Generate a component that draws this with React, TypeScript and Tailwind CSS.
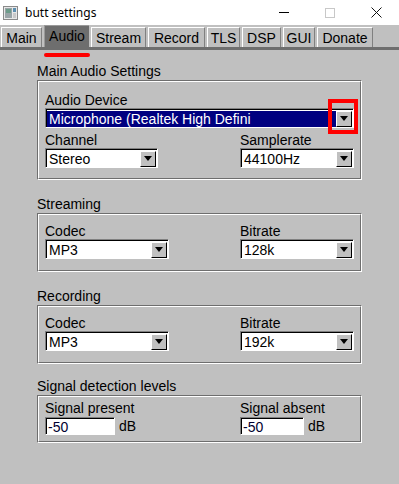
import React from "react";

const font = { fontFamily: '"Liberation Sans", Arial, sans-serif' };

function TitleIcon() {
  return (
    <svg width="15" height="14" viewBox="0 0 15 14" className="ml-[3px]">
      <rect x="0.5" y="0.5" width="14" height="13" fill="#e8e8e8" stroke="#8a8a8a" />
      <rect x="2" y="2" width="7" height="10" fill="#9aa5a8" />
      <rect x="3" y="3" width="5" height="4" fill="#6d9c8a" />
      <rect x="10" y="2" width="3" height="4" fill="#5d8fb0" />
      <rect x="10" y="7" width="3" height="5" fill="#c9c9c9" />
    </svg>
  );
}

function WindowControls() {
  return (
    <div className="ml-auto flex h-full items-center">
      <div className="flex h-full w-[46px] items-center justify-center">
        <div className="h-px w-[10px] bg-black" />
      </div>
      <div className="flex h-full w-[46px] items-center justify-center">
        <div className="h-[10px] w-[10px] border border-[#c8c8c8]" />
      </div>
      <div className="flex h-full w-[46px] items-center justify-center">
        <svg width="11" height="11" viewBox="0 0 11 11">
          <path d="M0.5 0.5 L10.5 10.5 M10.5 0.5 L0.5 10.5" stroke="#111" strokeWidth="1" />
        </svg>
      </div>
    </div>
  );
}

const tabs = [
  { name: "Main", w: "w-[41px]" },
  { name: "Audio", w: "w-[45px]" },
  { name: "Stream", w: "w-[55px]" },
  { name: "Record", w: "w-[57px]" },
  { name: "TLS", w: "w-[33px]" },
  { name: "DSP", w: "w-[39px]" },
  { name: "GUI", w: "w-[32px]" },
  { name: "Donate", w: "w-[56px]" },
];

function Tabs() {
  return (
    <div className="flex h-[22px] items-end gap-[2px] pl-[1px]">
      {tabs.map((t) =>
        t.name === "Audio" ? (
          <div
            key={t.name}
            className={`${t.w} flex h-[22px] items-start justify-center border-l border-t border-[#9a9a9a] bg-[#6e6e6e] pt-[2px] text-[14px] leading-[16px] text-black`}
          >
            {t.name}
          </div>
        ) : (
          <div
            key={t.name}
            className={`${t.w} flex h-[20px] items-start justify-center border-l border-t border-white border-r border-r-[#808080] bg-[#c0c0c0] pt-[2px] text-[14px] leading-[16px] text-black`}
          >
            {t.name}
          </div>
        )
      )}
    </div>
  );
}

function Arrow() {
  return (
    <div className="flex h-[16px] w-[16px] items-center justify-center border-l border-t border-white border-b border-r border-b-black border-r-black bg-[#c0c0c0]">
      <svg width="8" height="5" viewBox="0 0 8 5">
        <path d="M0 0 H8 L4 5 Z" fill="#000" />
      </svg>
    </div>
  );
}

function Select({
  value,
  className,
  selected,
}: {
  value: string;
  className: string;
  selected?: boolean;
}) {
  return (
    <div
      className={`${className} flex h-[20px] border-l border-t border-[#808080] border-b border-r border-b-white border-r-white`}
    >
      <div
        className={`flex flex-1 items-center border-l border-t border-black pr-[1px] ${
          selected ? "bg-white" : "bg-white"
        }`}
      >
        <div
          className={`flex h-[16px] flex-1 items-center overflow-hidden whitespace-nowrap pl-[2px] text-[14px] leading-[16px] ${
            selected ? "bg-[#000080] text-white" : "bg-white text-black"
          }`}
        >
          {value}
        </div>
        <Arrow />
      </div>
    </div>
  );
}

function Input({ value, className }: { value: string; className: string }) {
  return (
    <div
      className={`${className} flex h-[18px] border-l border-t border-[#808080] border-b border-r border-b-white border-r-white`}
    >
      <div className="flex flex-1 items-center border-l border-t border-black bg-white pl-[1px] text-[14px] leading-[16px] text-[#000030]">
        {value}
      </div>
    </div>
  );
}

function Group({
  title,
  mt,
  h,
  pt,
  children,
}: {
  title: string;
  mt: string;
  h: string;
  pt: string;
  children: React.ReactNode;
}) {
  return (
    <div className={`${mt} ml-[37px] w-[325px]`}>
      <div className="h-[16px] text-[14px] leading-[16px] text-black">{title}</div>
      <div className={`${h} mt-[1px] border-l border-t border-[#6e6e6e] border-b border-r border-b-white border-r-white`}>
        <div className={`h-full border-l border-t border-white border-b border-r border-b-[#6e6e6e] border-r-[#6e6e6e] pl-[6px] ${pt}`}>
          {children}
        </div>
      </div>
    </div>
  );
}

function Label({ children }: { children: React.ReactNode }) {
  return <div className="h-[16px] text-[14px] leading-[16px] text-black">{children}</div>;
}

export default function App() {
  return (
    <div className="h-[484px] w-[399px] overflow-hidden bg-[#c0c0c0]" style={font}>
      <div className="flex h-[25px] items-center bg-white">
        <TitleIcon />
        <span
          className="ml-[7px] text-[12px] text-black"
          style={{ fontFamily: '"Noto Sans", "Open Sans", sans-serif' }}
        >
          butt settings
        </span>
        <WindowControls />
      </div>

      <Tabs />
      <div className="h-[3px] bg-[#6e6e6e]" />

      <div className="ml-[44px] mt-[3px] h-[4px] w-[46px] rounded-full bg-[#ff0000]" />

      <Group title="Main Audio Settings" mt="mt-[6px]" h="h-[100px]" pt="pt-[10px]">
        <Label>Audio Device</Label>
        <div className="relative">
          <Select value="Microphone (Realtek High Defini" className="w-[309px]" selected />
          <div className="absolute left-[283px] top-[-9px] h-[35px] w-[30px] border-[4px] border-[#ff0000]" />
        </div>
        <div className="mt-[4px] flex">
          <div className="w-[195px]">
            <Label>Channel</Label>
            <Select value="Stereo" className="w-[113px]" />
          </div>
          <div>
            <Label>Samplerate</Label>
            <Select value="44100Hz" className="w-[114px]" />
          </div>
        </div>
      </Group>

      <Group title="Streaming" mt="mt-[16px]" h="h-[59px]" pt="pt-[8px]">
        <div className="flex">
          <div className="w-[195px]">
            <Label>Codec</Label>
            <Select value="MP3" className="w-[124px]" />
          </div>
          <div>
            <Label>Bitrate</Label>
            <Select value="128k" className="w-[114px]" />
          </div>
        </div>
      </Group>

      <Group title="Recording" mt="mt-[16px]" h="h-[59px]" pt="pt-[8px]">
        <div className="flex">
          <div className="w-[195px]">
            <Label>Codec</Label>
            <Select value="MP3" className="w-[124px]" />
          </div>
          <div>
            <Label>Bitrate</Label>
            <Select value="192k" className="w-[114px]" />
          </div>
        </div>
      </Group>

      <Group title="Signal detection levels" mt="mt-[14px]" h="h-[48px]" pt="pt-[3px]">
        <div className="flex">
          <div className="w-[195px]">
            <Label>Signal present</Label>
            <div className="mt-[1px] flex items-center">
              <Input value="-50" className="w-[70px]" />
              <span className="ml-[4px] text-[14px] leading-[16px] text-black">dB</span>
            </div>
          </div>
          <div>
            <Label>Signal absent</Label>
            <div className="mt-[1px] flex items-center">
              <Input value="-50" className="w-[64px]" />
              <span className="ml-[4px] text-[14px] leading-[16px] text-black">dB</span>
            </div>
          </div>
        </div>
      </Group>
    </div>
  );
}
